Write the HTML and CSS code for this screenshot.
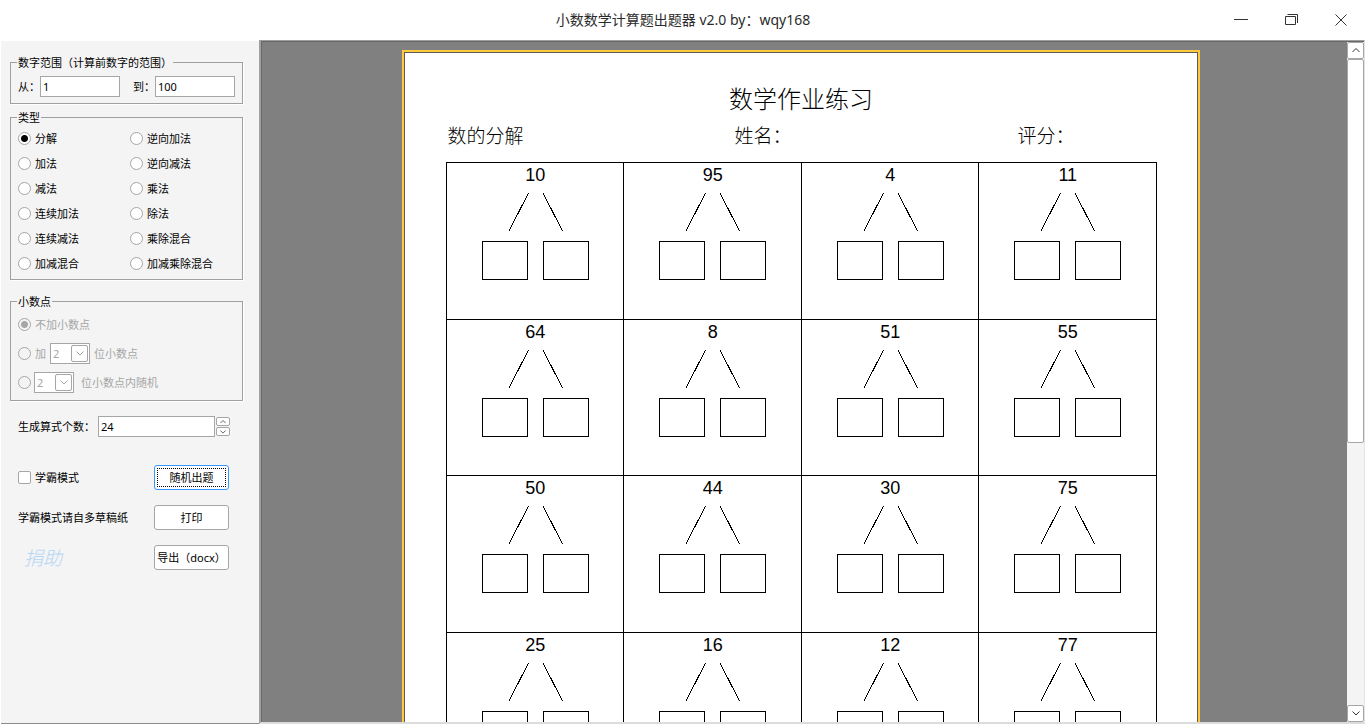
FILE: index.html
```html
<!DOCTYPE html>
<html lang="zh-CN">
<head>
<meta charset="utf-8">
<title>小数数学计算题出题器 v2.0 by：wqy168</title>
<link rel="stylesheet" href="styles.css">
</head>
<body>
<svg class="defs" aria-hidden="true">
  <symbol id="split" viewBox="0 0 107 88">
    <path d="M46.5 0L27 38M61 0L80.500 38" shape-rendering="crispEdges"/>
    <path d="M.5 48.500H45.500V86.500H.5ZM61.500 48.500H106.500V86.500H61.500Z" shape-rendering="crispEdges"/>
  </symbol>
  <symbol id="down" viewBox="0 0 8 5"><path d="M.5 .5L4 4L7.500 .5"/></symbol>
  <symbol id="up" viewBox="0 0 8 5"><path d="M.5 4L4 .5L7.500 4"/></symbol>
</svg>
<div class="app">
  <header class="titlebar">
    <div class="side"></div>
    <h1>小数数学计算题出题器 v2.0 by：wqy168</h1>
    <div class="side controls">
      <button type="button" aria-label="最小化"><svg width="14" height="14" viewBox="0 0 14 14"><path d="M0 6.500H14"/></svg></button>
      <button type="button" aria-label="还原"><svg width="14" height="14" viewBox="0 0 14 14"><path d="M1.500 3.500H11.500V11.500H1.500ZM3.500 1.500H13.500V10"/></svg></button>
      <button type="button" aria-label="关闭"><svg width="14" height="14" viewBox="0 0 14 14"><path d="M1.500 1.500L12.500 12.500M12.500 1.500L1.500 12.500"/></svg></button>
    </div>
  </header>
  <div class="body">
    <form class="sidebar">
      <fieldset class="range">
        <legend>数字范围（计算前数字的范围）</legend>
        <div class="range-row">
          <label for="from">从：</label><input class="text" id="from" value="1">
          <label class="to" for="to">到：</label><input class="text" id="to" value="100">
        </div>
      </fieldset>
      <fieldset class="types">
        <legend>类型</legend>
        <div class="type-grid">
          <label><input type="radio" name="type" checked>分解</label>
          <label><input type="radio" name="type">逆向加法</label>
          <label><input type="radio" name="type">加法</label>
          <label><input type="radio" name="type">逆向减法</label>
          <label><input type="radio" name="type">减法</label>
          <label><input type="radio" name="type">乘法</label>
          <label><input type="radio" name="type">连续加法</label>
          <label><input type="radio" name="type">除法</label>
          <label><input type="radio" name="type">连续减法</label>
          <label><input type="radio" name="type">乘除混合</label>
          <label><input type="radio" name="type">加减混合</label>
          <label><input type="radio" name="type">加减乘除混合</label>
        </div>
      </fieldset>
      <fieldset class="decimals">
        <legend>小数点</legend>
        <div class="dec-row"><label><input type="radio" name="dec" checked disabled>不加小数点</label></div>
        <div class="dec-row">
          <label><input type="radio" name="dec" disabled>加</label>
          <span class="combo"><select disabled aria-label="小数位数"><option>2</option></select><span class="drop"><svg width="8" height="5"><use href="#down"/></svg></span></span>
          <span>位小数点</span>
        </div>
        <div class="dec-row random">
          <input type="radio" name="dec" id="dec-random" disabled>
          <span class="combo"><select disabled aria-label="随机小数位数"><option>2</option></select><span class="drop"><svg width="8" height="5"><use href="#down"/></svg></span></span>
          <label for="dec-random">位小数点内随机</label>
        </div>
      </fieldset>
      <div class="count">
        <label for="count">生成算式个数：</label>
        <input class="text" id="count" value="24">
        <span class="spin">
          <button type="button" aria-label="增加"><svg width="6" height="4"><use href="#up"/></svg></button>
          <button type="button" aria-label="减少"><svg width="6" height="4"><use href="#down"/></svg></button>
        </span>
      </div>
      <div class="actions">
        <label><input type="checkbox">学霸模式</label>
        <button class="btn primary" type="button"><span>随机出题</span></button>
        <span>学霸模式请自多草稿纸</span>
        <button class="btn" type="button">打印</button>
        <a class="donate" href="#">捐助</a>
        <button class="btn" type="button">导出（docx）</button>
      </div>
    </form>
    <main class="viewer">
      <div class="desk">
        <article class="paper">
          <h2>数学作业练习</h2>
          <div class="meta"><span>数的分解</span><span>姓名：</span><span>评分：</span></div>
          <table>
            <tr>
              <td>10<svg><use href="#split"/></svg></td>
              <td>95<svg><use href="#split"/></svg></td>
              <td>4<svg><use href="#split"/></svg></td>
              <td>11<svg><use href="#split"/></svg></td>
            </tr>
            <tr>
              <td>64<svg><use href="#split"/></svg></td>
              <td>8<svg><use href="#split"/></svg></td>
              <td>51<svg><use href="#split"/></svg></td>
              <td>55<svg><use href="#split"/></svg></td>
            </tr>
            <tr>
              <td>50<svg><use href="#split"/></svg></td>
              <td>44<svg><use href="#split"/></svg></td>
              <td>30<svg><use href="#split"/></svg></td>
              <td>75<svg><use href="#split"/></svg></td>
            </tr>
            <tr>
              <td>25<svg><use href="#split"/></svg></td>
              <td>16<svg><use href="#split"/></svg></td>
              <td>12<svg><use href="#split"/></svg></td>
              <td>77<svg><use href="#split"/></svg></td>
            </tr>
          </table>
        </article>
      </div>
      <div class="scrollbar">
        <button type="button" aria-label="向上滚动"><svg width="8" height="5"><use href="#up"/></svg></button>
        <div class="track"><div class="thumb"></div></div>
        <button type="button" aria-label="向下滚动"><svg width="8" height="5"><use href="#down"/></svg></button>
      </div>
    </main>
  </div>
</div>
</body>
</html>
```
FILE: styles.css
```css
* { box-sizing: border-box; }
body {
  margin: 0;
  background: #fff;
  color: #000;
  font: 11px/14px "Noto Sans", "Noto Sans CJK SC", sans-serif;
}
button, input, select { font: inherit; color: inherit; margin: 0; padding: 0; }
button { display: flex; align-items: center; justify-content: center; background: #fff; }
svg { display: block; fill: none; stroke: #333; }
.defs { position: absolute; width: 0; height: 0; }

.app { display: flex; flex-direction: column; height: 100vh; overflow: hidden; }
.titlebar { display: flex; align-items: center; height: 40px; flex: none; }
.titlebar h1 { margin: 0; font-size: 14px; line-height: 20px; font-weight: 400; color: #2b2b2b; }
.side { flex: 1; }
.controls { display: flex; justify-content: flex-end; }
.controls button { width: 50px; height: 40px; border: 0; background: none; }

.body { display: flex; flex: 1; min-height: 0; }
.sidebar {
  width: 258px;
  flex: none;
  margin: 1px 0 0 1px;
  padding: 14px 16px 0 9px;
  background: #f4f4f4;
  border-bottom: 1px solid #8c8c8c;
}
fieldset {
  min-width: 0;
  margin: 0;
  padding: 0 7px;
  border: 1px solid #a0a0a0;
  box-shadow: 1px 1px 0 #fff;
}
legend { height: 14px; padding: 0 1px; margin-left: -1px; line-height: 16px; white-space: nowrap; }
label { display: flex; align-items: center; white-space: nowrap; }

.text {
  width: 80px;
  height: 21px;
  padding: 0 2px;
  border: 1px solid #a6a6a6;
  background: #fff;
  outline: 0;
}
input[type="radio"], input[type="checkbox"] {
  appearance: none;
  width: 13px;
  height: 13px;
  margin-right: 4px;
  flex: none;
  border: 1px solid #a6a6a6;
  background: #fff;
}
input[type="radio"] { border-radius: 50%; }
input[type="checkbox"] { border-radius: 2px; }
input[type="radio"]:checked { background: radial-gradient(circle, #000 3px, #fff 4px); }
input[type="radio"]:disabled { background: #f4f4f4; }
input[type="radio"]:disabled:checked { background: radial-gradient(circle, #a6a6a6 3px, #f4f4f4 4px); }

.range-row { display: flex; align-items: center; padding: 7px 0 6px; }
.range-row label { width: 22px; }
.range-row .to { margin-left: 13px; }
.types { margin-top: 6px; padding-top: 2px; padding-bottom: 3px; }
.type-grid { display: grid; grid-template-columns: 112px 1fr; grid-auto-rows: 25px; }
.decimals { margin-top: 14px; padding-top: 2px; padding-bottom: 3px; }
.dec-row { display: flex; align-items: center; height: 29px; gap: 4px; color: #a6a6a6; }
.dec-row.random { gap: 7px; }
.dec-row.random input { margin-right: -4px; }

.combo { position: relative; display: flex; }
.combo select {
  appearance: none;
  width: 40px;
  height: 21px;
  padding: 0 2px;
  border: 1px solid #a6a6a6;
  border-radius: 0;
  background: #fff;
  color: #a6a6a6;
  opacity: 1;
}
.drop {
  position: absolute;
  top: 2px;
  right: 2px;
  display: flex;
  align-items: center;
  justify-content: center;
  width: 17px;
  height: 17px;
  border: 1px solid #a6a6a6;
  border-radius: 2px;
  pointer-events: none;
}
.drop svg { stroke: #a6a6a6; }

.count { display: flex; align-items: center; margin-top: 15px; padding-left: 8px; }
.count label { width: 80px; }
.count .text { width: 117px; }
.spin { display: flex; flex-direction: column; gap: 1px; margin-left: 1px; }
.spin button { width: 14px; height: 9px; border: 1px solid #a6a6a6; border-radius: 2px; }

.actions {
  display: grid;
  grid-template-columns: 1fr 75px;
  row-gap: 15px;
  align-items: center;
  margin-top: 28px;
  padding: 0 14px 0 8px;
}
.btn { height: 25px; border: 1px solid #a6a6a6; border-radius: 3px; white-space: nowrap; }
.primary { padding: 2px; border-color: #3399ff; }
.primary span { flex: 1; height: 19px; line-height: 17px; border: 1px dotted #000; }
.donate {
  margin-left: 6px;
  font-size: 19px;
  line-height: 22px;
  font-style: italic;
  font-weight: 300;
  color: #b5d5f5;
  text-decoration: none;
}

.viewer {
  display: flex;
  flex: 1;
  min-width: 0;
  margin-right: 1px;
  border: solid #a0a0a0;
  border-width: 1px 1px 2px 2px;
  border-right-color: #e3e3e3;
  border-bottom-color: #dcdcdc;
}
.desk {
  flex: 1;
  min-width: 0;
  padding: 8px 8px 0 0;
  overflow: hidden;
  background: #808080;
  border: solid #696969;
  border-width: 1px 0 0 1px;
}
.paper {
  width: 798px;
  max-width: 100%;
  height: 1128px;
  margin: 0 auto;
  padding: 32px 41px 32px 42px;
  border: 2px solid #ffc83d;
  background: #fff;
  box-shadow: inset 0 0 0 1px #5a5a5a;
  font-family: "Liberation Sans", "Noto Sans CJK SC", sans-serif;
}
.paper h2 { margin: 0; font-size: 24px; line-height: 32px; font-weight: 300; text-align: center; }
.meta {
  display: grid;
  grid-template-columns: 287px 283px 1fr;
  padding: 8px 2px 12px;
  font-size: 19px;
  line-height: 26px;
  font-weight: 300;
}
.paper table { width: 100%; height: 627px; border-collapse: collapse; table-layout: fixed; }
.paper td {
  padding: 1px 0 0 1px;
  border: 1px solid #000;
  vertical-align: top;
  text-align: center;
  font-size: 18px;
  line-height: 22px;
}
.paper svg { width: 107px; height: 88px; margin: 7px auto 0; stroke: #000; }

.scrollbar {
  display: flex;
  flex-direction: column;
  width: 17px;
  flex: none;
  background: #f4f4f4;
  border-top: 1px solid #696969;
}
.scrollbar button { height: 17px; border: 1px solid #a6a6a6; border-radius: 2px; }
.track { flex: 1; }
.thumb { height: 384px; max-height: 60%; background: #fff; border: 1px solid #a6a6a6; border-radius: 2px; }
```
